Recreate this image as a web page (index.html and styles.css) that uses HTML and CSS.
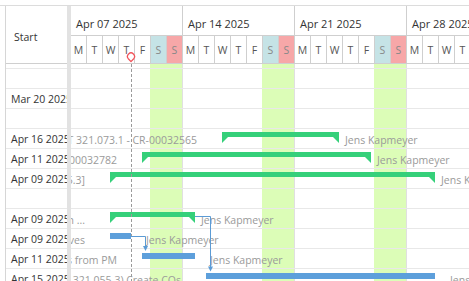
FILE: index.html
```html
<!DOCTYPE html>
<html lang="en">
<head>
  <meta charset="UTF-8">
  <meta name="viewport" content="width=device-width, initial-scale=1.0">
  <title>Project Schedule - Gantt</title>
  <link rel="stylesheet" href="styles.css">
</head>
<body>
  <div class="gantt">
    <div class="grid">
      <div class="grid-head">Start</div>
      <div class="grid-body">
        <div class="rows">
          <div class="row"></div>
          <div class="row"></div>
          <div class="row">Mar 20 2025</div>
          <div class="row"></div>
          <div class="row">Apr 16 2025</div>
          <div class="row">Apr 11 2025</div>
          <div class="row">Apr 09 2025</div>
          <div class="row"></div>
          <div class="row">Apr 09 2025</div>
          <div class="row">Apr 09 2025</div>
          <div class="row">Apr 11 2025</div>
          <div class="row">Apr 15 2025</div>
        </div>
      </div>
    </div>

    <div class="splitter"></div>

    <div class="chart">
      <div class="chart-head">
        <div class="weeks">
          <div class="week">Apr 07 2025</div>
          <div class="week">Apr 14 2025</div>
          <div class="week">Apr 21 2025</div>
          <div class="week">Apr 28 2025</div>
        </div>
        <div class="days">
          <div class="day">M</div><div class="day">T</div><div class="day">W</div><div class="day">T</div><div class="day">F</div><div class="day sat">S</div><div class="day sun">S</div>
          <div class="day">M</div><div class="day">T</div><div class="day">W</div><div class="day">T</div><div class="day">F</div><div class="day sat">S</div><div class="day sun">S</div>
          <div class="day">M</div><div class="day">T</div><div class="day">W</div><div class="day">T</div><div class="day">F</div><div class="day sat">S</div><div class="day sun">S</div>
          <div class="day">M</div><div class="day">T</div><div class="day">W</div><div class="day">T</div><div class="day">F</div><div class="day sat">S</div><div class="day sun">S</div>
        </div>
        <!-- today marker -->
        <svg class="today-marker" width="10" height="11" viewBox="0 0 10 11">
          <path d="M5 9.6 L2.3 6.7 A3.5 3.5 0 1 1 7.7 6.7 Z" fill="#fff" stroke="#f2545b" stroke-width="1.3" stroke-linejoin="round"/>
        </svg>
      </div>

      <div class="chart-body">
        <div class="rows">
          <div class="row"></div>
          <div class="row"></div>
          <div class="row"></div>
          <div class="row"></div>
          <div class="row">
            <div class="bar summary" style="left: 151px; width: 117px;">
              <span class="label-left">Change Request PT 321.073.1 - CR-00032565</span>
              <span class="label-right">Jens Kapmeyer</span>
            </div>
          </div>
          <div class="row">
            <div class="bar summary" style="left: 71px; width: 229px;">
              <span class="label-left">Change Request CR-00032782</span>
              <span class="label-right">Jens Kapmeyer</span>
            </div>
          </div>
          <div class="row">
            <div class="bar summary" style="left: 39px; width: 325px;">
              <span class="label-left">Rollout Phase 2 [321.055.3]</span>
              <span class="label-right">Jens Kapmeyer</span>
            </div>
          </div>
          <div class="row"></div>
          <div class="row">
            <div class="bar summary" style="left: 39px; width: 85px;">
              <span class="label-left">Project Coordination ...</span>
              <span class="label-right">Jens Kapmeyer</span>
            </div>
          </div>
          <div class="row">
            <div class="bar task" style="left: 39px; width: 21px;">
              <span class="label-left">Define Objectives</span>
              <span class="label-right">Jens Kapmeyer</span>
            </div>
          </div>
          <div class="row">
            <div class="bar task" style="left: 71px; width: 53px;">
              <span class="label-left">Gather Inputs from PM</span>
              <span class="label-right">Jens Kapmeyer</span>
            </div>
          </div>
          <div class="row">
            <div class="bar task" style="left: 135px; width: 229px;">
              <span class="label-left">Change Order 321.055.3) Create COs</span>
              <span class="label-right">Jens Kapmeyer</span>
            </div>
          </div>
        </div>

        <div class="today-line"></div>

        <!-- dependency links -->
        <svg class="links" width="400" height="220">
          <path d="M60 172.5 H74.5 V183" fill="none" stroke="#5b9bd5" stroke-width="1"/>
          <polygon points="72,182 77,182 74.5,187" fill="#5b9bd5"/>
          <path d="M124 152.5 H139.5 V203" fill="none" stroke="#5b9bd5" stroke-width="1"/>
          <polygon points="137,202.5 142,202.5 139.5,207.5" fill="#5b9bd5"/>
        </svg>
      </div>
    </div>
  </div>
</body>
</html>
```

FILE: styles.css
```css
* { box-sizing: border-box; }
body { margin: 0; font-family: "Open Sans", "Noto Sans", sans-serif; font-size: 10.5px; color: #333; background: #fff; }

.gantt { display: flex; margin-top: 5px; height: calc(100vh - 5px); border-top: 1px solid #dcdcdc; overflow: hidden; }

/* left grid */
.grid { width: 62px; margin-left: 5px; border-left: 1px solid #d6d6d6; display: flex; flex-direction: column; overflow: hidden; flex-shrink: 0; }
.grid-head { height: 58px; border-bottom: 1px solid #cfcfcf; display: flex; align-items: center; padding: 4px 0 0 8px; }
.grid-body { flex: 1; overflow: hidden; }
.grid-body .row { padding-left: 5px; white-space: nowrap; overflow: hidden; }

.rows { margin-top: -15px; }
.row { position: relative; height: 20px; line-height: 20px; border-bottom: 1px solid #e8e8e8; }

.splitter { width: 4px; flex-shrink: 0; background: #e2e2e2; }

/* chart */
.chart { flex: 1; display: flex; flex-direction: column; overflow: hidden; min-width: 0; }
.chart-head { position: relative; height: 58px; border-bottom: 1px solid #cfcfcf; flex-shrink: 0; }
.weeks { display: flex; height: 30px; border-bottom: 1px solid #cfcfcf; }
.week { width: 112px; flex-shrink: 0; border-right: 1px solid #cfcfcf; padding: 10px 0 0 5px; font-size: 11px; line-height: 16px; white-space: nowrap; }
.days { display: flex; height: 27px; }
.day { width: 16px; flex-shrink: 0; border-right: 1px solid #cfcfcf; display: flex; align-items: center; justify-content: center; color: #555; }
.day.sat { background: #c5e3e6; color: #888; }
.day.sun { background: #f7a7a8; color: #888; }
.today-marker { position: absolute; left: 55px; top: 46px; }

.chart-body { position: relative; flex: 1; overflow: hidden;
  background: repeating-linear-gradient(to right, transparent 0 79px, #dcfdb7 79px 111px, #e0e0e0 111px 112px); }
.today-line { position: absolute; left: 60px; top: 0; bottom: 0; width: 1px;
  background: repeating-linear-gradient(to bottom, #9a9a9a 0 3px, transparent 3px 5px); }
.links { position: absolute; left: 0; top: 0; overflow: visible; }

/* bars */
.bar { position: absolute; }
.bar.summary { top: 3px; height: 5px; background: #35d07a; }
.bar.summary::before, .bar.summary::after { content: ""; position: absolute; top: 100%; width: 0; height: 0; border-top: 6px solid #35d07a; }
.bar.summary::before { left: 0; border-right: 6px solid transparent; }
.bar.summary::after { right: 0; border-left: 6px solid transparent; }
.bar.task { top: 4px; height: 6px; background: #5d9fdb; }

.label-left, .label-right { position: absolute; line-height: 20px; white-space: nowrap; color: #9a9a9a; }
.summary .label-left, .summary .label-right { top: -2px; }
.task .label-left, .task .label-right { top: -3px; }
.label-left { right: calc(100% + 25px); }
.summary .label-right { left: calc(100% + 6px); }
.task .label-right { left: calc(100% + 15px); }
```
